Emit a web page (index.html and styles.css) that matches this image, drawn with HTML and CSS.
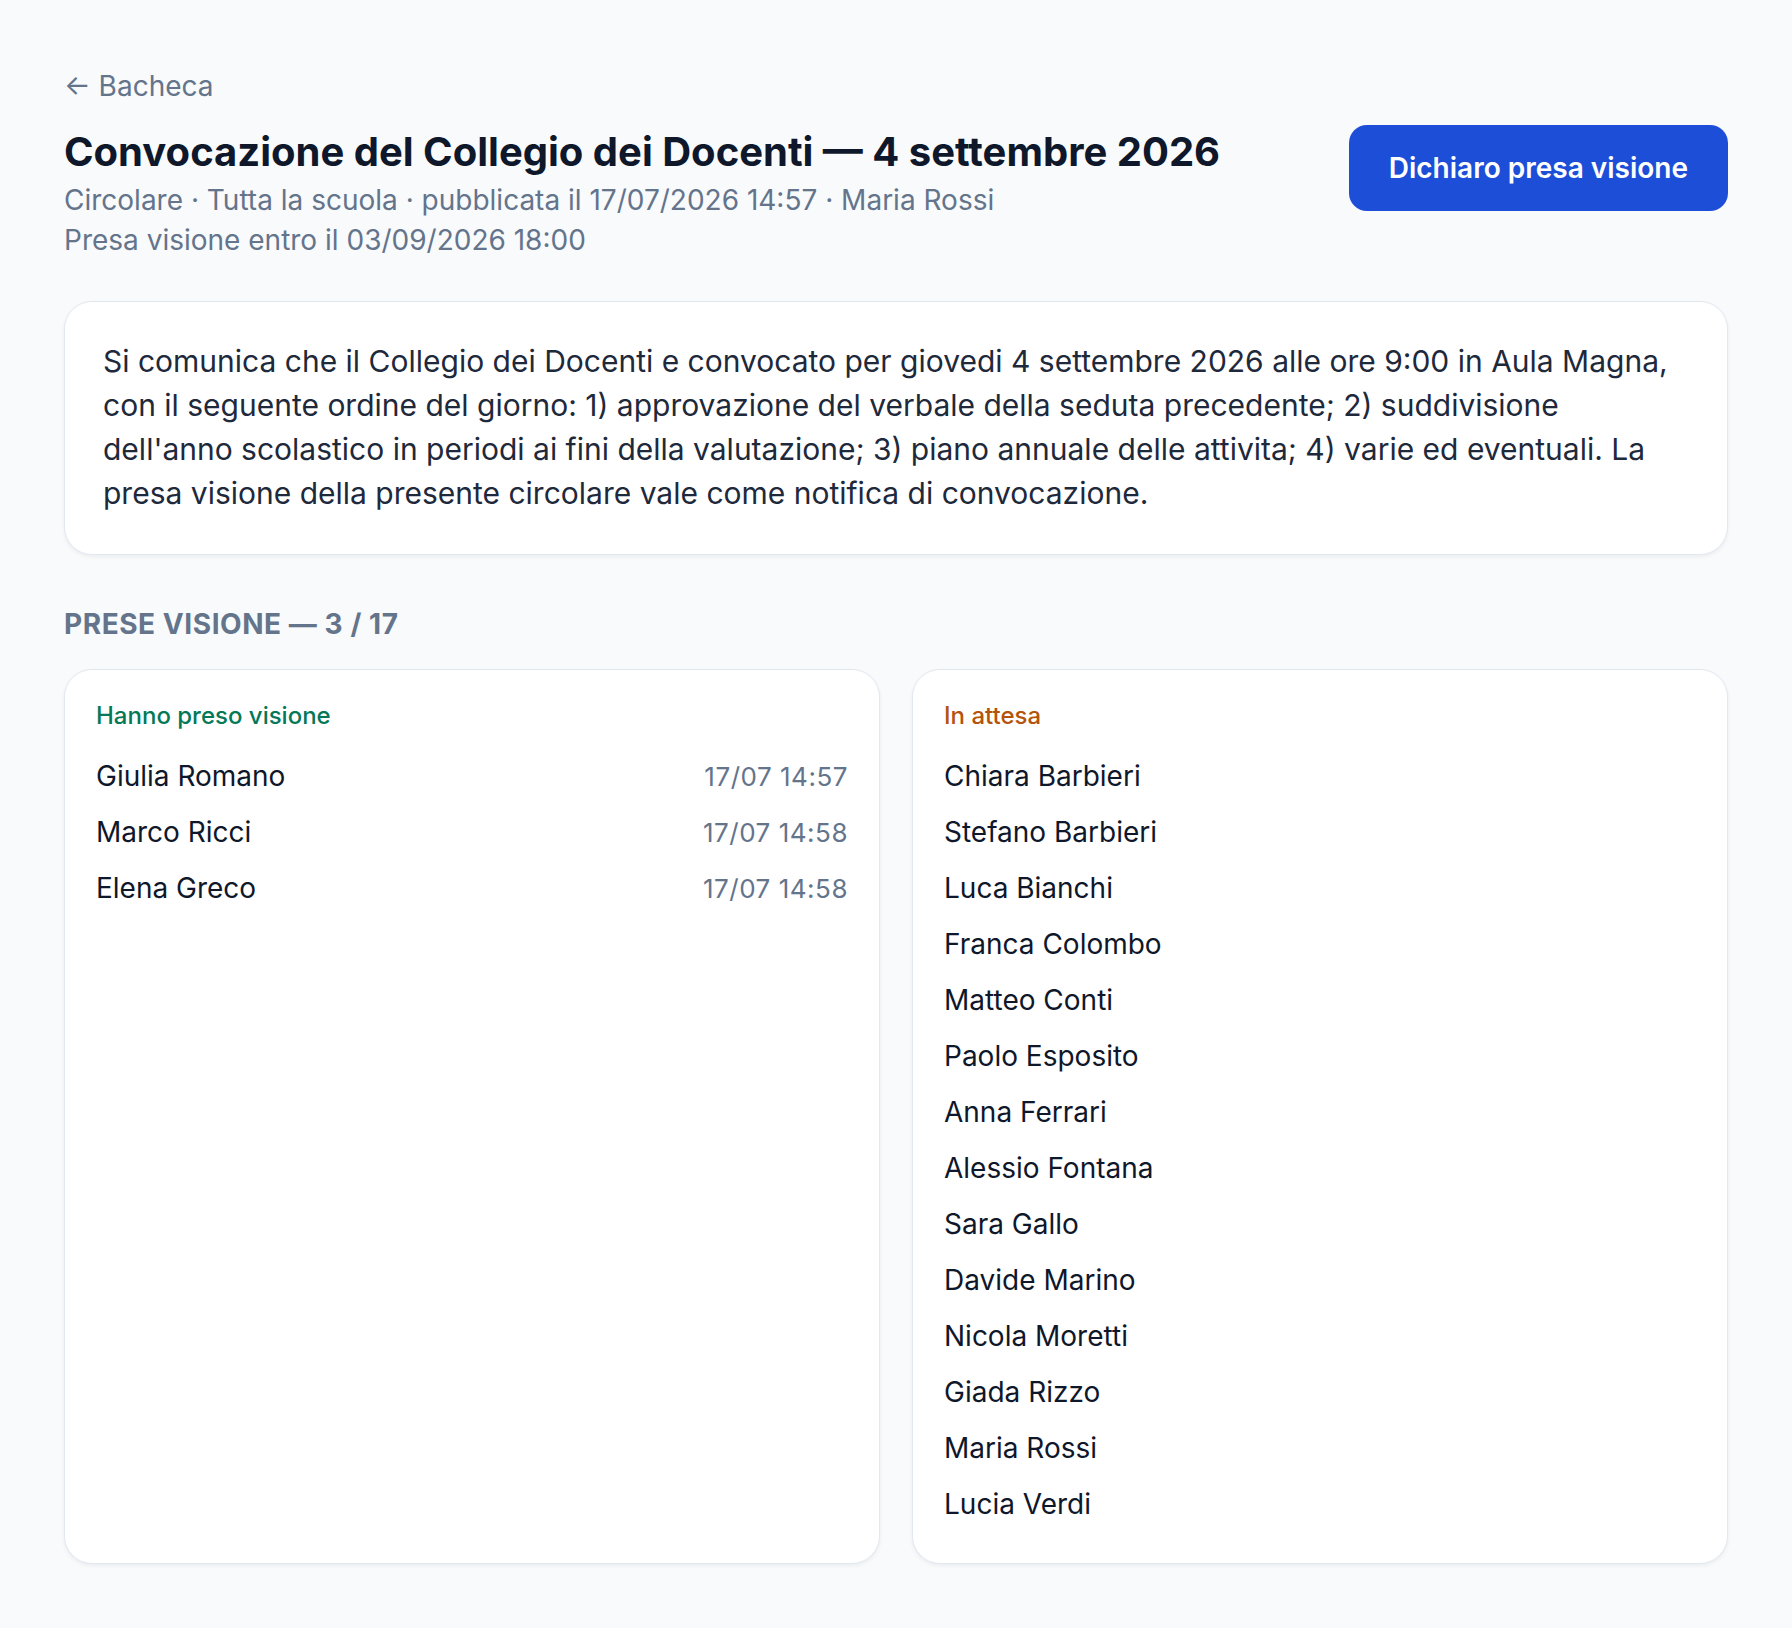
FILE: index.html
```html
<!DOCTYPE html>
<html lang="it">
<head>
    <meta charset="UTF-8">
    <meta name="viewport" content="width=device-width, initial-scale=1.0">
    <title>Convocazione del Collegio dei Docenti</title>
    <link rel="stylesheet" href="styles.css">
</head>
<body>
    <div class="page">
        <a class="back" href="#"><span class="arrow">&larr;</span> Bacheca</a>

        <div class="header">
            <div class="header-text">
                <h1>Convocazione del Collegio dei Docenti — 4 settembre 2026</h1>
                <p class="meta">Circolare · Tutta la scuola · pubblicata il 17/07/2026 14:57 · Maria Rossi</p>
                <p class="meta">Presa visione entro il 03/09/2026 18:00</p>
            </div>
            <button class="btn">Dichiaro presa visione</button>
        </div>

        <div class="body-card">
            Si comunica che il Collegio dei Docenti e convocato per giovedi 4 settembre 2026 alle ore 9:00 in Aula Magna, con il seguente ordine del giorno: 1) approvazione del verbale della seduta precedente; 2) suddivisione dell'anno scolastico in periodi ai fini della valutazione; 3) piano annuale delle attivita; 4) varie ed eventuali. La presa visione della presente circolare vale come notifica di convocazione.
        </div>

        <h2 class="section-title">Prese visione — 3 / 17</h2>

        <div class="columns">
            <div class="list-card">
                <div class="list-label done">Hanno preso visione</div>
                <ul class="people">
                    <li><span>Giulia Romano</span><span class="time">17/07 14:57</span></li>
                    <li><span>Marco Ricci</span><span class="time">17/07 14:58</span></li>
                    <li><span>Elena Greco</span><span class="time">17/07 14:58</span></li>
                </ul>
            </div>
            <div class="list-card">
                <div class="list-label waiting">In attesa</div>
                <ul class="people">
                    <li><span>Chiara Barbieri</span></li>
                    <li><span>Stefano Barbieri</span></li>
                    <li><span>Luca Bianchi</span></li>
                    <li><span>Franca Colombo</span></li>
                    <li><span>Matteo Conti</span></li>
                    <li><span>Paolo Esposito</span></li>
                    <li><span>Anna Ferrari</span></li>
                    <li><span>Alessio Fontana</span></li>
                    <li><span>Sara Gallo</span></li>
                    <li><span>Davide Marino</span></li>
                    <li><span>Nicola Moretti</span></li>
                    <li><span>Giada Rizzo</span></li>
                    <li><span>Maria Rossi</span></li>
                    <li><span>Lucia Verdi</span></li>
                </ul>
            </div>
        </div>
    </div>
</body>
</html>
```

FILE: styles.css
```css
body {
    margin: 0;
    background: #f8fafc;
    font-family: Inter, "Noto Sans", sans-serif;
    color: #0f172a;
}
.page {
    padding: 64px;
}
.back {
    display: inline-block;
    font-size: 28px;
    line-height: 44px;
    color: #64748b;
    text-decoration: none;
    margin-bottom: 17px;
}
.header {
    display: flex;
    justify-content: space-between;
    align-items: flex-start;
    gap: 32px;
}
h1 {
    margin: 0 0 1px;
    font-size: 40px;
    line-height: 54px;
    font-weight: 700;
    color: #0f172a;
}
.meta {
    margin: 0;
    font-size: 28px;
    line-height: 40px;
    color: #64748b;
}
.btn {
    background: #1d4ed8;
    color: white;
    border: none;
    border-radius: 18px;
    height: 86px;
    padding: 0 40px;
    font-family: inherit;
    font-size: 28px;
    font-weight: 600;
    cursor: pointer;
    white-space: nowrap;
}
.body-card {
    margin-top: 41px;
    background: white;
    border: 1px solid #e2e8f0;
    border-radius: 28px;
    padding: 37px 38px 39px;
    font-size: 30px;
    line-height: 44px;
    color: #1e293b;
    box-shadow: 0 2px 4px rgba(15,23,42,0.06);
}
.section-title {
    margin: 51px 0 27px;
    font-size: 28px;
    line-height: 36px;
    font-weight: 700;
    text-transform: uppercase;
    letter-spacing: 0.02em;
    color: #64748b;
}
.columns {
    display: grid;
    grid-template-columns: 1fr 1fr;
    gap: 32px;
}
.list-card {
    background: white;
    border: 1px solid #e2e8f0;
    border-radius: 28px;
    padding: 31px;
    box-shadow: 0 2px 4px rgba(15,23,42,0.06);
}
.list-label {
    font-size: 24px;
    line-height: 30px;
    font-weight: 500;
    margin-bottom: 17px;
}
.done {
    color: #047857;
}
.waiting {
    color: #b45309;
}
.people {
    list-style: none;
    margin: 0;
    padding: 0;
}
.people li {
    display: flex;
    justify-content: space-between;
    align-items: center;
    height: 56px;
    font-size: 28px;
}
.time {
    font-size: 26px;
    color: #64748b;
    letter-spacing: 0.02em;
}
```
